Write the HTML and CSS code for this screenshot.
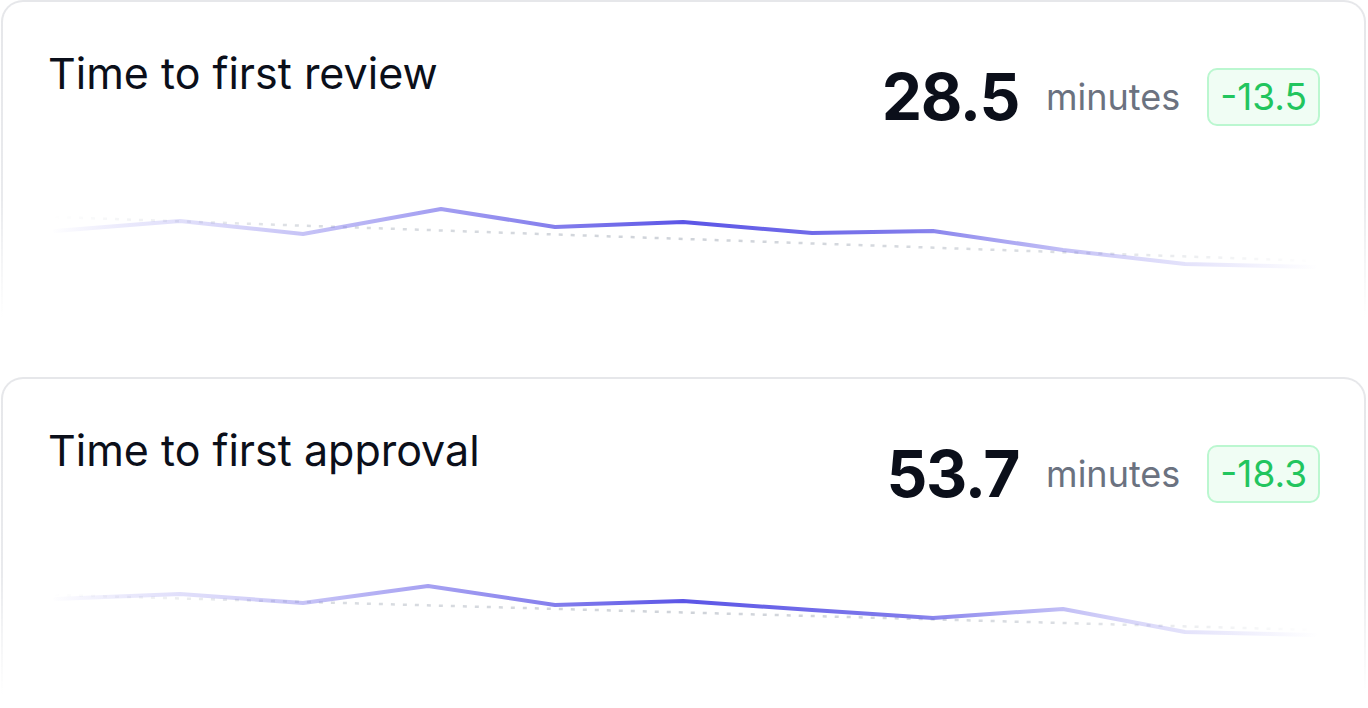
FILE: index.html
```html
<!DOCTYPE html>
<html>
<head>
<meta charset="utf-8">
<link rel="stylesheet" href="styles.css">
</head>
<body>
<div class="page">
  <section class="card">
    <div class="card-head">
      <h2 class="title">Time to first review</h2>
      <div class="stat">
        <span class="value">28.5</span>
        <span class="unit">minutes</span>
        <span class="delta">-13.5</span>
      </div>
    </div>
    <svg class="chart" viewBox="-2 0 1268 100" width="1268" height="100">
      <defs>
        <linearGradient id="lg1" gradientUnits="userSpaceOnUse" x1="0" y1="0" x2="1268" y2="0">
          <stop offset="0" stop-color="#5b55e6" stop-opacity="0"/>
          <stop offset="0.12" stop-color="#8f89ee" stop-opacity="0.3"/>
          <stop offset="0.3" stop-color="#7f78ec" stop-opacity="0.7"/>
          <stop offset="0.5" stop-color="#5b55e6" stop-opacity="1"/>
          <stop offset="0.68" stop-color="#6a64e8" stop-opacity="0.85"/>
          <stop offset="0.85" stop-color="#8f89ee" stop-opacity="0.35"/>
          <stop offset="1" stop-color="#8f89ee" stop-opacity="0"/>
        </linearGradient>
        <linearGradient id="dg1" gradientUnits="userSpaceOnUse" x1="0" y1="0" x2="1268" y2="0">
          <stop offset="0" stop-color="#d1d5db" stop-opacity="0"/>
          <stop offset="0.2" stop-color="#d1d5db" stop-opacity="0.8"/>
          <stop offset="0.5" stop-color="#cfd3d9" stop-opacity="1"/>
          <stop offset="0.8" stop-color="#d1d5db" stop-opacity="0.8"/>
          <stop offset="1" stop-color="#d1d5db" stop-opacity="0"/>
        </linearGradient>
      </defs>
      <line class="trend" x1="5" y1="26" x2="1265" y2="70" stroke="url(#dg1)"/>
      <polyline class="line" stroke="url(#lg1)" points="5,40 130,30 253,43 391,18 505,36 633,31 762,42 883,40 1013,59 1135,73 1265,76"/>
    </svg>
  </section>
  <section class="card">
    <div class="card-head">
      <h2 class="title">Time to first approval</h2>
      <div class="stat">
        <span class="value">53.7</span>
        <span class="unit">minutes</span>
        <span class="delta">-18.3</span>
      </div>
    </div>
    <svg class="chart" viewBox="-2 0 1268 100" width="1268" height="100">
      <line class="trend" x1="5" y1="27" x2="1265" y2="62" stroke="url(#dg1)"/>
      <polyline class="line" stroke="url(#lg1)" points="5,31 130,26 253,35 378,18 505,37 633,33 762,42 883,50 1013,41 1135,64 1265,67"/>
    </svg>
  </section>
</div>
</body>
</html>
```

FILE: styles.css
```css
html, body {
  margin: 0;
  padding: 0;
  background: #ffffff;
  overflow: hidden;
}

body {
  font-family: Inter, "Noto Sans", sans-serif;
  color: #0b0f1a;
}

.page {
  display: flex;
  flex-direction: column;
  gap: 17px;
  padding: 0 2px 0 1px;
  width: 1368px;
  box-sizing: border-box;
}

.card {
  height: 360px;
  box-sizing: border-box;
  border: 2px solid transparent;
  border-radius: 22px;
  background:
    linear-gradient(#ffffff, #ffffff) padding-box,
    linear-gradient(to bottom, #e6e7ea 0%, #e9eaed 55%, rgba(236,237,240,0) 88%) border-box;
  padding: 46px 44px 0 45px;
  display: flex;
  flex-direction: column;
}

.card-head {
  display: flex;
  justify-content: space-between;
  align-items: flex-start;
}

.title {
  margin: 0;
  font-size: 43px;
  font-weight: 400;
  line-height: 1.2;
  color: #0b0f1a;
}

.stat {
  display: flex;
  align-items: center;
  gap: 27px;
  margin-top: 17px;
}

.value {
  font-size: 64px;
  font-weight: 700;
  letter-spacing: -0.02em;
  line-height: 1;
  color: #0b0f1a;
}

.unit {
  font-size: 36px;
  color: #6b7280;
  line-height: 1;
}

.delta {
  font-size: 37px;
  line-height: 1;
  color: #22c55e;
  background: #f0fdf4;
  border: 2px solid #bbf7d0;
  border-radius: 10px;
  padding: 8px 11px 9px 11px;
}

.chart {
  display: block;
  margin-top: 62px;
  overflow: visible;
}

.line {
  fill: none;
  stroke-width: 4;
  stroke-linejoin: round;
  stroke-linecap: round;
}

.trend {
  stroke-width: 2.5;
  stroke-dasharray: 4 8;
}
```
